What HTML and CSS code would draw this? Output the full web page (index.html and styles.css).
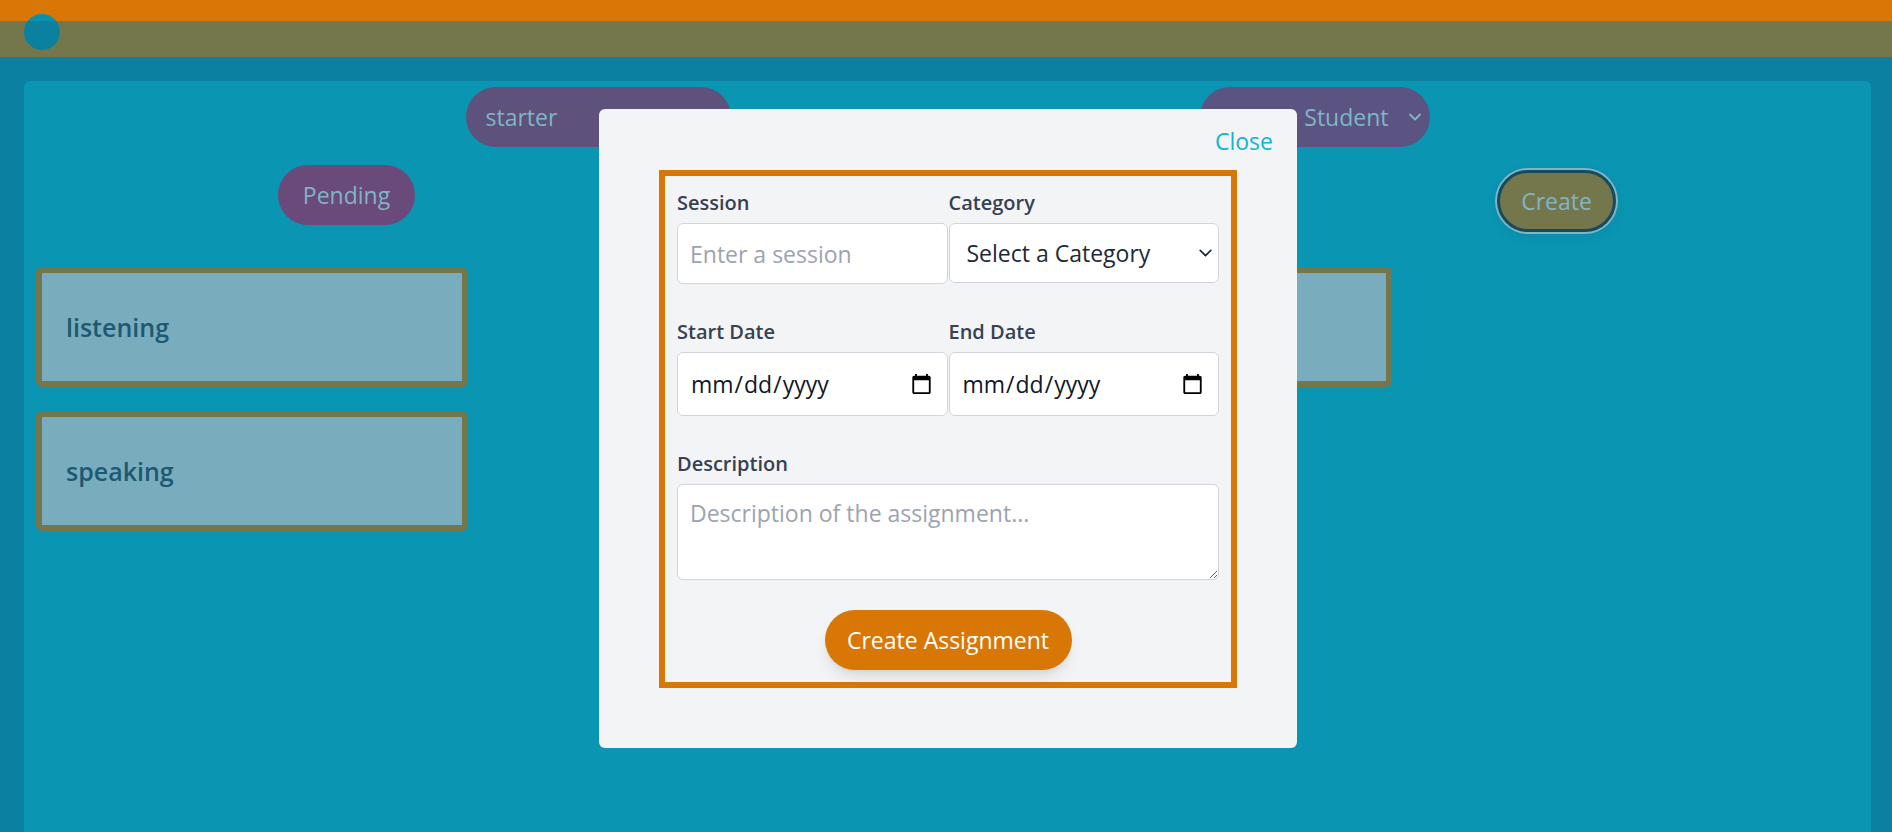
FILE: index.html
```html
<!DOCTYPE html>
<html lang="en">
<head>
<meta charset="utf-8">
<title>Assignments</title>
<link rel="stylesheet" href="styles.css">
</head>
<body>
<header class="topbar">
  <div class="accent"></div>
  <div class="navbar"></div>
  <span class="avatar"></span>
</header>

<main class="page">
  <section class="panel">
    <div class="filters">
      <div class="pill pill-level">
        <span class="pill-text">starter</span>
      </div>
      <div class="pill pill-student">
        <span class="pill-text">a Student</span>
        <svg class="pill-chevron" width="12" height="8" viewBox="0 0 12 8" aria-hidden="true"><polyline points="1,1.5 6,6.5 11,1.5" fill="none" stroke="#80b5c6" stroke-width="1.8" stroke-linecap="round" stroke-linejoin="round"/></svg>
      </div>
    </div>

    <div class="actions">
      <button class="status" type="button">Pending</button>
      <div class="actions-spacer"></div>
      <button class="create" type="button">Create</button>
    </div>

    <div class="cards">
      <div class="card">listening</div>
      <div class="card"></div>
      <div class="card">speaking</div>
    </div>
  </section>
</main>

<div class="modal">
  <div class="close-row">
    <button class="close" type="button">Close</button>
  </div>
  <form class="form-box">
    <div class="field-row">
      <div class="field">
        <label class="field-label" for="session">Session</label>
        <input class="field-input" id="session" type="text" placeholder="Enter a session">
      </div>
      <div class="field">
        <label class="field-label" for="category">Category</label>
        <div class="select-wrap">
          <select class="field-input field-select" id="category">
            <option>Select a Category</option>
          </select>
          <svg class="select-chevron" width="13" height="8" viewBox="0 0 13 8" aria-hidden="true"><polyline points="1.2,1.3 6.5,6.6 11.8,1.3" fill="none" stroke="#1f2937" stroke-width="1.7" stroke-linecap="round" stroke-linejoin="round"/></svg>
        </div>
      </div>
    </div>
    <div class="field-row">
      <div class="field">
        <label class="field-label" for="start">Start Date</label>
        <input class="field-input field-date" id="start" type="date">
      </div>
      <div class="field">
        <label class="field-label" for="end">End Date</label>
        <input class="field-input field-date" id="end" type="date">
      </div>
    </div>
    <div class="field field-desc">
      <label class="field-label" for="desc">Description</label>
      <textarea class="field-input field-textarea" id="desc" placeholder="Description of the assignment..."></textarea>
    </div>
    <div class="submit-row">
      <button class="submit" type="button">Create Assignment</button>
    </div>
  </form>
</div>
</body>
</html>
```

FILE: styles.css
```css
* {
  box-sizing: border-box;
}

html,
body {
  margin: 0;
  height: 100%;
  overflow: hidden;
}

body {
  background: #0b80a0;
  font-family: "Open Sans", "Noto Sans", sans-serif;
}

button,
input,
select,
textarea {
  font-family: inherit;
}

/* ---------- header ---------- */
.topbar {
  position: relative;
}

.accent {
  height: 21px;
  background: #d97706;
}

.navbar {
  height: 36px;
  background: #74774c;
}

.avatar {
  position: absolute;
  left: 24px;
  top: 14px;
  width: 36px;
  height: 36px;
  border-radius: 50%;
  background: linear-gradient(#0b91ae 0 7px, #0b81a0 7px);
}

/* ---------- page ---------- */
.page {
  padding: 24px 21px 0 24px;
}

.panel {
  min-height: 820px;
  background: #0a95b3;
  border-radius: 6px;
  padding: 6px 12px 0;
}

.filters {
  display: flex;
  justify-content: center;
  gap: 469px;
}

.pill {
  height: 60px;
  border-radius: 30px;
  display: flex;
  align-items: center;
  font-size: 23px;
  color: #80b5c6;
  white-space: nowrap;
  overflow: hidden;
}

.pill-level {
  width: 265px;
  padding: 0 20px;
  background: #5e517c;
}

.pill-student {
  width: 230px;
  padding: 0 9px 0 18px;
  justify-content: flex-end;
  gap: 20px;
  background: #5b5482;
}

.pill-chevron {
  flex: none;
}

.actions {
  display: grid;
  grid-template-columns: repeat(3, 1fr);
  justify-items: center;
  align-items: start;
  margin-top: 18px;
  padding-left: 8px;
}

.status {
  height: 60px;
  padding: 0 25px;
  border: 0;
  border-radius: 30px;
  background: #6a4a7a;
  color: #80b5c6;
  font-size: 23px;
}

.create {
  margin-top: 5px;
  width: 119px;
  height: 62px;
  border: 3px solid #174a5d;
  border-radius: 31px;
  background: #74774c;
  color: #80b5c6;
  font-size: 23px;
  box-shadow: 0 0 0 2px #80b5c6, 0 4px 14px rgba(0, 0, 0, 0.08);
}

.cards {
  display: grid;
  grid-template-columns: 1fr 1fr;
  gap: 24px;
  margin-top: 35px;
}

.card {
  width: 432px;
  height: 120px;
  display: flex;
  align-items: center;
  padding: 0 24px;
  border: 6px solid #74774c;
  border-radius: 6px;
  background: #79acbd;
  color: #1c5a73;
  font-size: 25px;
  font-weight: 600;
}

/* ---------- modal ---------- */
.modal {
  position: fixed;
  left: 599px;
  top: 109px;
  width: 698px;
  height: 639px;
  padding: 16px 24px 0;
  background: #f3f4f6;
  border-radius: 6px;
}

.close-row {
  display: flex;
  justify-content: flex-end;
}

.close {
  padding: 0;
  border: 0;
  background: none;
  color: #0fb5d3;
  font-size: 23px;
  line-height: normal;
}

.form-box {
  margin: 13px 36px 0;
  border: 6px solid #d97706;
  padding: 15px 12px 12px;
}

.field-row {
  display: grid;
  grid-template-columns: 1fr 1fr;
  column-gap: 1px;
  margin-bottom: 36px;
}

.field-label {
  display: block;
  margin-bottom: 8px;
  font-size: 20px;
  font-weight: 600;
  line-height: 24px;
  color: #374151;
}

.field-input {
  display: block;
  width: 100%;
  height: 61px;
  margin: 0;
  padding: 0 12px;
  border: 1px solid #d1d5db;
  border-radius: 6px;
  background: #fff;
  color: #1f2937;
  font-size: 23px;
  outline: none;
}

.field-input::placeholder {
  color: #9ca3af;
}

.select-wrap {
  position: relative;
}

.field-select {
  appearance: none;
  -webkit-appearance: none;
  height: 60px;
  padding: 0 36px 0 17px;
}

.select-chevron {
  position: absolute;
  right: 7px;
  top: 26px;
  pointer-events: none;
}

.field-date {
  height: 64px;
  color: #111827;
}

.field-desc {
  margin-bottom: 30px;
}

.field-textarea {
  height: 96px;
  padding: 12px;
  resize: vertical;
  line-height: normal;
}

.submit-row {
  display: flex;
  justify-content: center;
}

.submit {
  width: 247px;
  height: 60px;
  border: 0;
  border-radius: 30px;
  background: #d97706;
  color: #fff;
  font-size: 23px;
  box-shadow: 0 10px 15px -3px rgba(0, 0, 0, 0.1), 0 4px 6px -4px rgba(0, 0, 0, 0.1);
}
```
